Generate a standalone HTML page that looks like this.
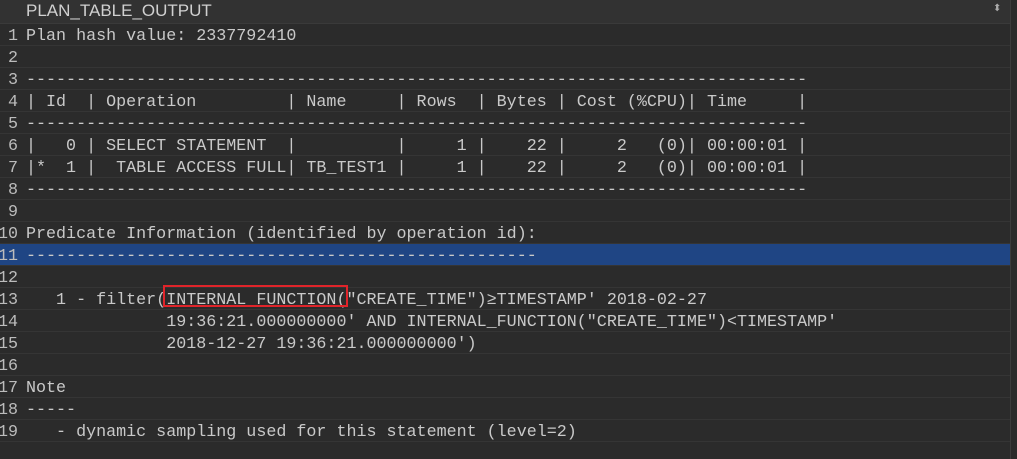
<!DOCTYPE html><html><head><style>
body{margin:0;width:1017px;height:459px;background:#2b2b2b;overflow:hidden;font-family:"Liberation Mono",monospace;color:#c9c9c9}
.hdr{position:absolute;left:0;top:0;width:1010px;height:23px;background:#323232;border-bottom:1px solid #3a3a3a}
.hdr span{position:absolute;left:26px;top:1px;font:17px "Liberation Sans",sans-serif;color:#d0d0d0}
.vl{position:absolute;left:1010px;top:0;width:1px;height:459px;background:#3c3c3c}
.r{position:absolute;left:0;width:1010px;height:21px;border-bottom:1px solid #353535;font-size:16.7px;line-height:22px;white-space:pre}
.r b{font-weight:normal;position:absolute;top:2px;left:-4px;width:22px;text-align:right;color:#bcbcbc;overflow:hidden}
.r i{font-style:normal;position:absolute;top:2px;left:26px}
.sel{background:#1f4584}
.box{position:absolute;left:163px;top:285px;width:185px;height:22px;border:2px solid #e0242a;box-sizing:border-box}
</style></head><body>
<div class="hdr"><span>PLAN_TABLE_OUTPUT</span><span style="left:993px;top:3px;font-size:10px;color:#aaa">⬍</span></div>
<div class="vl"></div>
<div class="r" style="top:24px"><b>1</b><i>Plan hash value: 2337792410</i></div>
<div class="r" style="top:46px"><b>2</b><i></i></div>
<div class="r" style="top:68px"><b>3</b><i>------------------------------------------------------------------------------</i></div>
<div class="r" style="top:90px"><b>4</b><i>| Id  | Operation         | Name     | Rows  | Bytes | Cost (%CPU)| Time     |</i></div>
<div class="r" style="top:112px"><b>5</b><i>------------------------------------------------------------------------------</i></div>
<div class="r" style="top:134px"><b>6</b><i>|   0 | SELECT STATEMENT  |          |     1 |    22 |     2   (0)| 00:00:01 |</i></div>
<div class="r" style="top:156px"><b>7</b><i>|*  1 |  TABLE ACCESS FULL| TB_TEST1 |     1 |    22 |     2   (0)| 00:00:01 |</i></div>
<div class="r" style="top:178px"><b>8</b><i>------------------------------------------------------------------------------</i></div>
<div class="r" style="top:200px"><b>9</b><i></i></div>
<div class="r" style="top:222px"><b>10</b><i>Predicate Information (identified by operation id):</i></div>
<div class="r sel" style="top:244px"><b>11</b><i>---------------------------------------------------</i></div>
<div class="r" style="top:266px"><b>12</b><i></i></div>
<div class="r" style="top:288px"><b>13</b><i>   1 - filter(INTERNAL_FUNCTION("CREATE_TIME")≥TIMESTAMP' 2018-02-27</i></div>
<div class="r" style="top:310px"><b>14</b><i>              19:36:21.000000000' AND INTERNAL_FUNCTION("CREATE_TIME")&lt;TIMESTAMP'</i></div>
<div class="r" style="top:332px"><b>15</b><i>              2018-12-27 19:36:21.000000000')</i></div>
<div class="r" style="top:354px"><b>16</b><i></i></div>
<div class="r" style="top:376px"><b>17</b><i>Note</i></div>
<div class="r" style="top:398px"><b>18</b><i>-----</i></div>
<div class="r" style="top:420px"><b>19</b><i>   - dynamic sampling used for this statement (level=2)</i></div>
<div class="box"></div>
</body></html>
